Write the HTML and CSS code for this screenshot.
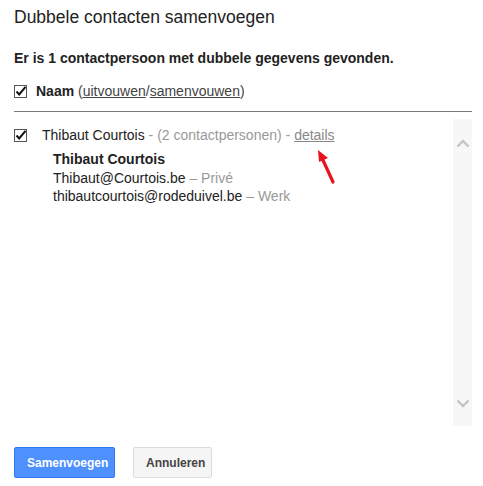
FILE: index.html
```html
<!DOCTYPE html>
<html lang="nl">
<head>
<meta charset="utf-8">
<title>Dubbele contacten samenvoegen</title>
<link rel="stylesheet" href="styles.css">
</head>
<body>
<div class="dialog">
  <h1 class="title">Dubbele contacten samenvoegen</h1>
  <p class="summary">Er is 1 contactpersoon met dubbele gegevens gevonden.</p>
  <div class="name-row">
    <span class="check"><svg viewBox="0 0 13 13" width="13" height="13"><rect x="0.5" y="0.5" width="12" height="12" fill="#fff" stroke="#555"/><path d="M2.5 6.5 L5.2 9.4 L11.5 1.8" fill="none" stroke="#111" stroke-width="2"/></svg></span>
    <span class="label"><b>Naam</b> <span class="paren">(<a href="#">uitvouwen</a>/<a href="#">samenvouwen</a>)</span></span>
  </div>
  <div class="list-wrap">
    <div class="list">
      <div class="group-row">
        <span class="check"><svg viewBox="0 0 13 13" width="13" height="13"><rect x="0.5" y="0.5" width="12" height="12" fill="#fff" stroke="#555"/><path d="M2.5 6.5 L5.2 9.4 L11.5 1.8" fill="none" stroke="#111" stroke-width="2"/></svg></span>
        <span class="label"><span class="gname">Thibaut Courtois</span><span class="muted"> - (2 contactpersonen) - </span><a class="details" href="#">details</a></span>
      </div>
      <div class="contact">
        <div class="cname">Thibaut Courtois</div>
        <div>Thibaut@Courtois.be <span class="muted">– Privé</span></div>
        <div>thibautcourtois@rodeduivel.be <span class="muted">– Werk</span></div>
      </div>
      <svg class="arrow" width="22" height="36" viewBox="0 0 22 36"><path d="M17 33 L6 9" stroke="#e8141b" stroke-width="3.2" stroke-linecap="round"/><path d="M2 1 L12 9 L3 13 Z" fill="#e8141b"/></svg>
    </div>
    <div class="scroll">
      <svg width="14" height="9" viewBox="0 0 14 9"><path d="M1.5 7.5 L7 2 L12.5 7.5" fill="none" stroke="#c4c4c4" stroke-width="2.4"/></svg>
      <svg width="14" height="9" viewBox="0 0 14 9"><path d="M1.5 1.5 L7 7 L12.5 1.5" fill="none" stroke="#c4c4c4" stroke-width="2.4"/></svg>
    </div>
  </div>
  <div class="buttons">
    <button class="btn primary">Samenvoegen</button>
    <button class="btn">Annuleren</button>
  </div>
</div>
</body>
</html>
```
FILE: styles.css
```css
html, body {
  margin: 0;
  padding: 0;
  background: #fff;
}
body {
  font-family: "Liberation Sans", Arial, sans-serif;
  font-size: 14px;
  color: #222;
}
.dialog {
  width: 458px;
  padding: 7px 11px 0 14px;
}
.title {
  margin: 0;
  font-size: 17.5px;
  font-weight: normal;
  line-height: 20px;
  color: #222;
}
.summary {
  margin: 22px 0 0;
  font-weight: bold;
  font-size: 14px;
  line-height: 18px;
  color: #222;
}
.name-row {
  display: flex;
  align-items: center;
  margin-top: 15px;
  line-height: 18px;
  padding-bottom: 11px;
  border-bottom: 1px solid #7a7a7a;
}
.label {
  white-space: pre;
}
.check {
  display: inline-flex;
  flex: none;
  width: 13px;
  height: 13px;
  margin-right: 9px;
}
.paren, .paren a {
  color: #444;
}
.list-wrap {
  display: flex;
  margin-top: 7px;
  height: 307px;
}
.list {
  position: relative;
  flex: 1;
}
.group-row {
  display: flex;
  align-items: center;
  height: 20px;
  margin-top: 6px;
}
.group-row .check {
  margin-right: 15px;
}
.muted {
  color: #999;
}
.details {
  color: #888;
}
.contact {
  margin-top: 5px;
  padding-left: 39px;
  line-height: 18.5px;
}
.cname {
  font-weight: bold;
}
.arrow {
  position: absolute;
  left: 302px;
  top: 30px;
}
.scroll {
  width: 19px;
  background: #f7f7f7;
  display: flex;
  flex-direction: column;
  justify-content: space-between;
  align-items: center;
  padding: 20px 0 18px;
  box-sizing: border-box;
}
.buttons {
  display: flex;
  gap: 18px;
  margin-top: 21px;
}
.btn {
  font-family: "Liberation Sans", Arial, sans-serif;
  font-size: 12px;
  font-weight: bold;
  height: 31px;
  padding: 0 12px;
  border-radius: 2px;
  border: 1px solid #dcdcdc;
  background: #f5f5f5;
  color: #444;
}
.btn.primary {
  width: 101px;
  background: #4d90fe;
  border-color: #3079ed;
  color: #fff;
}
.btn:not(.primary) {
  width: 79px;
}
```
